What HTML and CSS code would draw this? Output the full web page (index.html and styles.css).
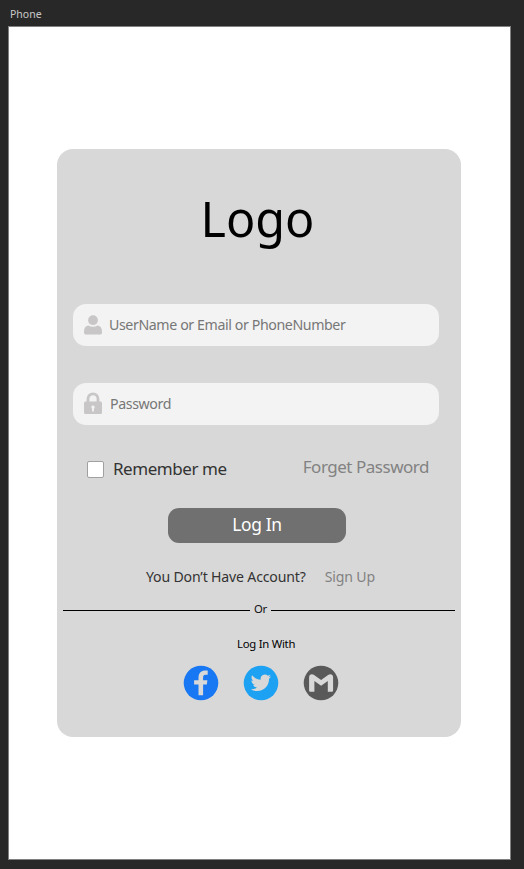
FILE: index.html
```
<!DOCTYPE html>
<html lang="en">
<head>
<meta charset="utf-8">
<title>Phone</title>
<link rel="stylesheet" href="styles.css">
</head>
<body>
<div class="artboard-name"><span>Phone</span></div>
<main class="artboard">
  <form class="card">
    <h1 class="logo">Logo</h1>
    <div class="field">
      <svg class="field-icon" viewBox="0 0 20 24" width="20" height="24"><circle cx="10" cy="7.2" r="4.9"/><path d="M1 18.500c0-3.800 1.700-5.600 4.400-6 2.700 1.600 6.500 1.600 9.200 0 2.700.4 4.400 2.200 4.400 6v.9c0 1.300-.8 2.100-2.100 2.100H3.100C1.800 21.500 1 20.700 1 19.400z"/></svg>
      <span class="user-hint">UserName or Email or PhoneNumber</span>
    </div>
    <div class="field field-password">
      <svg class="field-icon" viewBox="0 0 20 24" width="20" height="24"><path class="shackle" d="M5 10V6.800a5 5 0 0 1 10 0V10"/><path fill-rule="evenodd" d="M2.500 9.500h15q1.500 0 1.500 1.500v9.500q0 1.500-1.500 1.500h-15Q1 22 1 20.500V11q0-1.500 1.500-1.500zM10 13.400a1.800 1.800 0 0 0-.9 3.300V19.500h1.800v-2.800A1.800 1.800 0 0 0 10 13.400z"/></svg>
      <span class="password-hint">Password</span>
    </div>
    <div class="options">
      <i class="checkbox"></i>
      <span class="remember">Remember me</span>
      <span class="forget">Forget Password</span>
    </div>
    <div class="login"><span>Log In</span></div>
    <div class="signup"><span class="question">You Don’t Have Account?</span><span class="link">Sign Up</span></div>
    <div class="divider"><span>Or</span></div>
    <div class="with"><span>Log In With</span></div>
    <div class="social">
      <svg viewBox="0 0 36 36" width="36" height="36"><circle cx="18" cy="18" r="17.300" fill="#1877f2"/><path fill="#d8d8d8" d="M15.500 30.300V19.600h-4.400v-4.300h4.400v-2.500c0-4.900 2.900-7.200 6.800-7.200h2.400v4.200h-2.200c-1.700 0-2.400.9-2.400 2.400v3.100h4.300l-.6 4.300h-3.700v10.700z"/></svg>
      <svg viewBox="0 0 36 36" width="36" height="36"><circle cx="18" cy="18" r="17.300" fill="#1da1f2"/><path fill="#d8d8d8" transform="translate(7.700 7.600) scale(.85)" d="M23.950 4.570a10 10 0 0 1-2.820.775 4.960 4.960 0 0 0 2.160-2.723c-.951.555-2.005.959-3.127 1.184a4.920 4.920 0 0 0-8.384 4.482C7.690 8.095 4.067 6.130 1.640 3.162a4.822 4.822 0 0 0-.666 2.475c0 1.710.870 3.213 2.188 4.096a4.904 4.904 0 0 1-2.228-.616v.060a4.923 4.923 0 0 0 3.946 4.827 4.996 4.996 0 0 1-2.212.085 4.936 4.936 0 0 0 4.604 3.417 9.867 9.867 0 0 1-6.102 2.105c-.390 0-.779-.023-1.170-.067a13.995 13.995 0 0 0 7.557 2.209c9.053 0 13.998-7.496 13.998-13.985 0-.210 0-.420-.015-.630A9.935 9.935 0 0 0 24 4.590z"/></svg>
      <svg viewBox="0 0 36 36" width="36" height="36"><circle cx="18" cy="18" r="17.300" fill="#595959"/><path fill="#d8d8d8" d="M6.100 12.400c0-3.100 2.700-4.100 5-2.500l7 5.100 7-5.100c2.300-1.600 5-.6 5 2.500v12.800c0 1-.6 1.600-1.600 1.600h-3.700V15.900l-6.700 4.900-6.700-4.900v10.900H7.700c-1 0-1.600-.6-1.600-1.600z"/></svg>
    </div>
  </form>
</main>
</body>
</html>
```
FILE: styles.css
```
* { box-sizing: border-box; }
body {
  margin: 0;
  height: 869px;
  padding: 0 13px 0 8px;
  background: #282828;
  font-family: "Noto Sans", sans-serif;
  overflow: hidden;
}
.artboard-name {
  height: 26px;
  padding: 2px 0 0 2px;
  font-size: 10.500px;
  line-height: 24px;
  color: #c8c8c8;
}
.artboard {
  height: 834px;
  padding: 122px 0 0 48px;
  background: #fff;
  border: 1px solid #808080;
}
.card {
  display: flex;
  flex-direction: column;
  width: 404px;
  height: 588px;
  padding: 37px 6px 0;
  border-radius: 16px;
  background: #d8d8d8;
  white-space: nowrap;
}
.logo {
  margin: 0;
  height: 60px;
  padding-right: 3px;
  line-height: 64px;
  font-size: 48.500px;
  font-weight: 400;
  text-align: center;
  color: #000;
}
.field {
  display: flex;
  align-items: center;
  width: 366px;
  height: 42px;
  margin: 58px 0 0 10px;
  padding-left: 10px;
  border-radius: 13px;
  background: #f3f3f3;
  font-size: 14.200px;
  line-height: 42px;
  letter-spacing: -.4px;
  color: #777;
}
.field-password { margin-top: 37px; }
.field-icon { margin-right: 6px; fill: #c8c6c7; }
.password-hint { margin-left: 1px; }
.shackle { fill: none; stroke: #c8c6c7; stroke-width: 2.800; }
.options {
  display: flex;
  align-items: center;
  height: 34px;
  margin: 27px 26px 0 24px;
  font-size: 17px;
  line-height: 34px;
}
.checkbox {
  width: 17px;
  height: 17px;
  border: 1px solid #a0a0a0;
  border-radius: 2px;
  background: #fff;
}
.remember { margin-left: 9px; letter-spacing: -.45px; color: #333; }
.forget { margin: -4px 0 0 auto; letter-spacing: -.48px; color: #828282; }
.login {
  width: 178px;
  height: 35px;
  margin: 22px 0 0 105px;
  border-radius: 11px;
  background: #707070;
  color: #fff;
  font-size: 17.400px;
  line-height: 33px;
  letter-spacing: -.35px;
  text-align: center;
}
.signup {
  display: flex;
  height: 24px;
  margin: 21px 0 0 83px;
  font-size: 14.100px;
  line-height: 25px;
  letter-spacing: -.17px;
  color: #333;
}
.link { margin-left: 19px; color: #828282; }
.divider {
  display: flex;
  align-items: center;
  height: 20px;
  margin-top: 12px;
  font-size: 11.300px;
  line-height: 18px;
  gap: 4px;
  letter-spacing: -.3px;
  color: #111;
}
.divider span { margin-top: -2px; }
.divider::before, .divider::after { content: ""; height: 1px; background: #000; }
.divider::before { width: 187px; }
.divider::after { flex: 1; }
.with {
  height: 20px;
  margin: 14px 0 0 14px;
  padding-left: 160px;
  font-size: 11.300px;
  line-height: 20px;
  letter-spacing: -.25px;
  color: #000;
}
.social {
  display: flex;
  gap: 24px;
  margin: 11px 0 0 119.500px;
}
```
